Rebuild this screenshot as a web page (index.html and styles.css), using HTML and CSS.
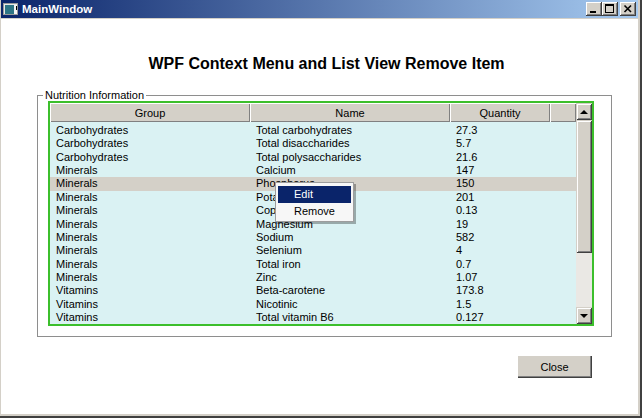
FILE: index.html
```html
<!DOCTYPE html>
<html>
<head>
<meta charset="utf-8">
<title>MainWindow</title>
<link rel="stylesheet" href="styles.css">
</head>
<body>
<div class="window">
  <div class="titlebar">
    <svg class="app-icon" width="16" height="16" viewBox="0 0 16 16">
      <rect x="1.5" y="2.5" width="14" height="11" fill="#e8e8e8" stroke="#9a9a9a"/>
      <rect x="3" y="4" width="9" height="9" fill="#2d7585"/>
      <rect x="12" y="4" width="3" height="9" fill="#f4f4f4"/>
      <rect x="14" y="5" width="1" height="4" fill="#000"/>
    </svg>
    <span class="title">MainWindow</span>
    <div class="caption-buttons">
      <span class="cbtn"><svg width="16" height="14" viewBox="0 0 16 14"><rect x="4" y="9" width="6" height="2" fill="#000"/></svg></span>
      <span class="cbtn"><svg width="16" height="14" viewBox="0 0 16 14"><rect x="3.5" y="2.5" width="8" height="8" fill="none" stroke="#000"/><rect x="3" y="2" width="9" height="2" fill="#000"/></svg></span>
      <span class="cbtn cbtn-close"><svg width="16" height="14" viewBox="0 0 16 14"><path d="M4.5 3.5 L11 10 M11 3.5 L4.5 10" stroke="#000" stroke-width="1.6"/></svg></span>
    </div>
  </div>
  <div class="client">
    <h1 class="heading">WPF Context Menu and List View Remove Item</h1>
    <fieldset class="group">
      <legend>Nutrition Information</legend>
      <div class="listview">
        <div class="lv-main">
          <div class="lv-header">
            <div class="hcell c-group">Group</div>
            <div class="hcell c-name">Name</div>
            <div class="hcell c-qty">Quantity</div>
            <div class="hcell c-fill"></div>
          </div>
          <div class="lv-rows">
            <div class="row"><span class="cell c-group">Carbohydrates</span><span class="cell c-name">Total carbohydrates</span><span class="cell c-qty">27.3</span></div>
            <div class="row"><span class="cell c-group">Carbohydrates</span><span class="cell c-name">Total disaccharides</span><span class="cell c-qty">5.7</span></div>
            <div class="row"><span class="cell c-group">Carbohydrates</span><span class="cell c-name">Total polysaccharides</span><span class="cell c-qty">21.6</span></div>
            <div class="row"><span class="cell c-group">Minerals</span><span class="cell c-name">Calcium</span><span class="cell c-qty">147</span></div>
            <div class="row selected"><span class="cell c-group">Minerals</span><span class="cell c-name">Phosphorus</span><span class="cell c-qty">150</span></div>
            <div class="row"><span class="cell c-group">Minerals</span><span class="cell c-name">Potassium</span><span class="cell c-qty">201</span></div>
            <div class="row"><span class="cell c-group">Minerals</span><span class="cell c-name">Copper</span><span class="cell c-qty">0.13</span></div>
            <div class="row"><span class="cell c-group">Minerals</span><span class="cell c-name">Magnesium</span><span class="cell c-qty">19</span></div>
            <div class="row"><span class="cell c-group">Minerals</span><span class="cell c-name">Sodium</span><span class="cell c-qty">582</span></div>
            <div class="row"><span class="cell c-group">Minerals</span><span class="cell c-name">Selenium</span><span class="cell c-qty">4</span></div>
            <div class="row"><span class="cell c-group">Minerals</span><span class="cell c-name">Total iron</span><span class="cell c-qty">0.7</span></div>
            <div class="row"><span class="cell c-group">Minerals</span><span class="cell c-name">Zinc</span><span class="cell c-qty">1.07</span></div>
            <div class="row"><span class="cell c-group">Vitamins</span><span class="cell c-name">Beta-carotene</span><span class="cell c-qty">173.8</span></div>
            <div class="row"><span class="cell c-group">Vitamins</span><span class="cell c-name">Nicotinic</span><span class="cell c-qty">1.5</span></div>
            <div class="row"><span class="cell c-group">Vitamins</span><span class="cell c-name">Total vitamin B6</span><span class="cell c-qty">0.127</span></div>
          </div>
        </div>
        <div class="vscroll">
          <div class="sbtn"><span class="arrow-up"></span></div>
          <div class="thumb"></div>
          <div class="track"></div>
          <div class="sbtn"><span class="arrow-down"></span></div>
        </div>
      </div>
    </fieldset>
    <div class="footer">
      <button class="btn">Close</button>
    </div>
  </div>
  <div class="context-menu">
    <div class="menu-item active">Edit</div>
    <div class="menu-item">Remove</div>
  </div>
</div>
</body>
</html>
```

FILE: styles.css
```css
html, body {
  margin: 0;
  padding: 0;
  background: #ffffff;
}

body {
  font-family: "Liberation Sans", Arial, sans-serif;
  font-size: 11px;
  color: #000;
}

.window {
  position: relative;
  width: 642px;
  height: 418px;
  box-sizing: border-box;
  background: #d4d0c8;
  border-right: 2px solid #404040;
  border-bottom: 2px solid #404040;
  padding: 0 2px 2px 1px;
  display: flex;
  flex-direction: column;
}

.titlebar {
  height: 18px;
  flex: none;
  margin-bottom: 1px;
  background: linear-gradient(to right, #0a246a, #a6caf0);
  display: flex;
  align-items: center;
  padding: 0 2px 0 1px;
}

.app-icon {
  flex: none;
  display: block;
}

.title {
  margin-left: 4px;
  color: #fff;
  font-weight: bold;
  font-size: 11.5px;
  white-space: nowrap;
}

.caption-buttons {
  margin-left: auto;
  display: flex;
  align-items: center;
}

.cbtn {
  width: 16px;
  height: 14px;
  background: #d4d0c8;
  box-shadow: inset -1px -1px 0 #404040, inset 1px 1px 0 #fff, inset -2px -2px 0 #808080;
  display: block;
}

.cbtn svg {
  display: block;
}

.cbtn-close {
  margin-left: 2px;
}

.client {
  flex: 1;
  background: #fff;
  display: flex;
  flex-direction: column;
}

.heading {
  margin: 35px 0 0 0;
  padding-left: 14px;
  text-align: center;
  font-size: 16px;
  line-height: 20px;
  font-weight: bold;
}

.group {
  margin: 16px 0 0 36px;
  width: 575px;
  box-sizing: border-box;
  padding: 0;
  border: 1px solid #8e8e8e;
  min-width: 0;
}

.group legend {
  margin-left: 5px;
  padding: 0 2px;
  line-height: 11px;
  font-size: 11px;
}

.listview {
  margin: 0 0 10px 10px;
  width: 546px;
  height: 225px;
  box-sizing: border-box;
  border: 2px solid #3cbf2c;
  background: #daf2f3;
  display: flex;
}

.lv-main {
  width: 526px;
  flex: none;
  display: flex;
  flex-direction: column;
}

.lv-header {
  height: 19px;
  display: flex;
  flex: none;
}

.hcell {
  height: 19px;
  box-sizing: border-box;
  background: #d4d0c8;
  box-shadow: inset 1px 1px 0 #fff, inset -1px -1px 0 #808080;
  text-align: center;
  line-height: 20px;
  flex: none;
}

.c-group { width: 200px; }
.c-name { width: 200px; }
.c-qty { width: 100px; }
.c-fill { width: 26px; }

.lv-rows {
  padding-top: 2px;
}

.row {
  display: flex;
  height: 13.36px;
  line-height: 13.36px;
}

.row.selected {
  background: #d4d0c8;
}

.cell {
  box-sizing: border-box;
  padding-left: 6px;
  white-space: nowrap;
  flex: none;
}

.vscroll {
  width: 16px;
  flex: none;
  display: flex;
  flex-direction: column;
}

.sbtn {
  height: 17px;
  flex: none;
  background: #d4d0c8;
  box-shadow: inset 1px 1px 0 #d4d0c8, inset -1px -1px 0 #404040, inset 2px 2px 0 #fff, inset -2px -2px 0 #808080;
  display: flex;
  align-items: center;
  justify-content: center;
}

.arrow-up {
  width: 0;
  height: 0;
  border-left: 4px solid transparent;
  border-right: 4px solid transparent;
  border-bottom: 4px solid #000;
}

.arrow-down {
  width: 0;
  height: 0;
  border-left: 4px solid transparent;
  border-right: 4px solid transparent;
  border-top: 4px solid #000;
}

.thumb {
  height: 133px;
  flex: none;
  background: #d4d0c8;
  box-shadow: inset 1px 1px 0 #d4d0c8, inset -1px -1px 0 #404040, inset 2px 2px 0 #fff, inset -2px -2px 0 #808080;
}

.track {
  flex: 1;
  background: #eae8e4;
}

.footer {
  display: flex;
  justify-content: flex-end;
  padding-right: 46px;
  margin-top: 18px;
}

.btn {
  width: 75px;
  height: 23px;
  border: none;
  background: #d4d0c8;
  box-shadow: inset 1px 1px 0 #fff, inset -1px -1px 0 #404040, inset -2px -2px 0 #808080;
  font-family: "Liberation Sans", Arial, sans-serif;
  font-size: 11px;
  color: #000;
  padding: 0;
}

.context-menu {
  position: absolute;
  left: 275px;
  top: 182px;
  width: 79px;
  box-sizing: border-box;
  border: 1px solid #9d9d9d;
  background: #f7f7f7;
  padding: 3px 2px 1px 2px;
  box-shadow: 2px 2px 0 rgba(0, 0, 0, 0.3);
}

.menu-item {
  height: 17px;
  line-height: 17px;
  padding-left: 16px;
}

.menu-item.active {
  background: #0a246a;
  color: #fff;
}
```
